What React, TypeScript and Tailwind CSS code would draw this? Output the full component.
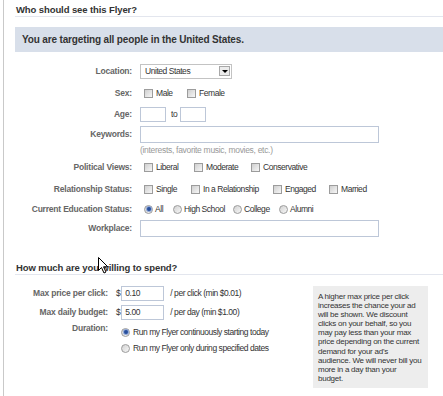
import React from 'react';

const lbl = "shrink-0 text-right text-[8.5px] font-bold tracking-[-0.2px] text-[#666] leading-[12px]";
const opt = "text-[8.5px] tracking-[-0.45px] text-[#333] leading-[12px] whitespace-nowrap";

function Box() {
  return <span className="block w-[9px] h-[9px] shrink-0 border border-[#9c9c9c] bg-gradient-to-br from-[#cfcfcf] to-[#f7f7f7]" />;
}

function Radio({ on }: { on?: boolean }) {
  return (
    <span className="flex items-center justify-center w-[9px] h-[9px] shrink-0 rounded-full border border-[#9c9c9c] bg-gradient-to-br from-[#d2d2d2] to-[#f7f7f7]">
      {on && <span className="block w-[4px] h-[4px] rounded-full bg-[#274f9c] ring-1 ring-[#8fa7d6]" />}
    </span>
  );
}

function Check({ label, w }: { label: string; w?: string }) {
  return (
    <div className={`flex items-center ${w ?? ''}`}>
      <Box />
      <span className={`ml-[3px] ${opt}`}>{label}</span>
    </div>
  );
}

function RadioOpt({ label, w, on }: { label: string; w?: string; on?: boolean }) {
  return (
    <div className={`flex items-center ${w ?? ''}`}>
      <Radio on={on} />
      <span className={`ml-[2px] ${opt}`}>{label}</span>
    </div>
  );
}

function Row({ label, className, children }: { label: string; className: string; children?: React.ReactNode }) {
  return (
    <div className={`flex items-center h-[18px] ${className}`}>
      <div className={`w-[117px] ${lbl}`}>{label}</div>
      <div className="ml-[8px] flex items-center">{children}</div>
    </div>
  );
}

function Heading({ children, className }: { children: React.ReactNode; className: string }) {
  return (
    <div className={`pt-[4px] pl-[1px] border-b border-[#e3e6ee] ${className}`}>
      <div className="text-[9.5px] font-bold tracking-[-0.1px] text-[#333] leading-[12px]">{children}</div>
    </div>
  );
}

const helpLines = [
  'A higher max price per click',
  'increases the chance your ad',
  'will be shown. We discount',
  'clicks on your behalf, so you',
  'may pay less than your max',
  'price depending on the current',
  "demand for your ad's",
  'audience. We will never bill you',
  'more in a day than your',
  'budget.',
];

export default function App() {
  return (
    <div className="relative w-[443px] h-[396px] overflow-hidden bg-white font-['Liberation_Sans',Arial,sans-serif]">
      <div className="ml-[3px] h-full border-l border-[#c9c9c9] pl-[11px]">
        {/* Who should see */}
        <Heading className="">Who should see this Flyer?</Heading>

        <div className="mt-[10px] h-[25px] bg-[#d8dfea] pl-[7px] text-[10px] font-bold tracking-[-0.15px] text-[#333] leading-[25px]">
          You are targeting all people in the United States.
        </div>

        <Row label="Location:" className="mt-[10px]">
          <div className="flex items-center w-[92px] h-[15px] border border-[#c3c3c3] bg-white pl-[4px] pr-[1px]">
            <span className={`flex-1 ${opt}`}>United States</span>
            <span className="flex items-center justify-center w-[11px] h-[10px] border border-[#a8a8a8] bg-[#ececec]">
              <span className="block w-0 h-0 border-l-[3px] border-r-[3px] border-t-[3px] border-l-transparent border-r-transparent border-t-black" />
            </span>
          </div>
        </Row>

        <Row label="Sex:" className="mt-[4px]">
          <div className="flex items-center pl-[4px]">
            <Check label="Male" w="w-[43px]" />
            <Check label="Female" />
          </div>
        </Row>

        <Row label="Age:" className="mt-[3px]">
          <span className="block w-[26px] h-[15px] border border-[#bdc7d8]" />
          <span className={`ml-[5px] ${opt}`}>to</span>
          <span className="ml-[3px] block w-[26px] h-[15px] border border-[#bdc7d8]" />
        </Row>

        <Row label="Keywords:" className="mt-[2px]">
          <span className="block w-[239px] h-[17px] border border-[#bdc7d8]" />
        </Row>

        <div className="flex h-[10px] items-center mt-[2px]">
          <div className="ml-[125px] text-[8.5px] tracking-[-0.3px] text-[#999] leading-[10px] whitespace-nowrap">
            (interests, favorite music, movies, etc.)
          </div>
        </div>

        <Row label="Political Views:" className="mt-[3px]">
          <div className="flex items-center pl-[4px]">
            <Check label="Liberal" w="w-[50px]" />
            <Check label="Moderate" w="w-[57px]" />
            <Check label="Conservative" />
          </div>
        </Row>

        <Row label="Relationship Status:" className="mt-[4px]">
          <div className="flex items-center pl-[4px]">
            <Check label="Single" w="w-[47px]" />
            <Check label="In a Relationship" w="w-[82px]" />
            <Check label="Engaged" w="w-[56px]" />
            <Check label="Married" />
          </div>
        </Row>

        <Row label="Current Education Status:" className="mt-[2px]">
          <div className="flex items-center pl-[4px]">
            <RadioOpt label="All" w="w-[29px]" on />
            <RadioOpt label="High School" w="w-[60px]" />
            <RadioOpt label="College" w="w-[46px]" />
            <RadioOpt label="Alumni" />
          </div>
        </Row>

        <Row label="Workplace:" className="mt-[1px]">
          <span className="block w-[239px] h-[17px] border border-[#bdc7d8]" />
        </Row>

        {/* How much */}
        <Heading className="mt-[21px]">How much are you willing to spend?</Heading>

        <div className="flex items-start mt-[9px]">
          <div className="w-[298px] shrink-0">
            <div className="flex items-center h-[18px]">
              <div className={`w-[93px] ${lbl}`}>Max price per click:</div>
              <span className={`ml-[8px] ${opt}`}>$</span>
              <span className={`ml-[1px] flex items-center w-[43px] h-[15px] border border-[#bdc7d8] pl-[3px] ${opt}`}>0.10</span>
              <span className={`ml-[6px] ${opt}`}>/ per click (min $0.01)</span>
            </div>
            <div className="flex items-center h-[18px] mt-[1px]">
              <div className={`w-[93px] ${lbl}`}>Max daily budget:</div>
              <span className={`ml-[8px] ${opt}`}>$</span>
              <span className={`ml-[1px] flex items-center w-[43px] h-[15px] border border-[#bdc7d8] pl-[3px] ${opt}`}>5.00</span>
              <span className={`ml-[6px] ${opt}`}>/ per day (min $1.00)</span>
            </div>
            <div className="flex items-start mt-[1px]">
              <div className={`w-[93px] ${lbl}`}>Duration:</div>
              <div className="ml-[13px] pt-[2px]">
                <div className="flex items-center h-[16px]">
                  <Radio on />
                  <span className={`ml-[3px] ${opt}`}>Run my Flyer continuously starting today</span>
                </div>
                <div className="flex items-center h-[16px]">
                  <Radio />
                  <span className={`ml-[3px] ${opt}`}>Run my Flyer only during specified dates</span>
                </div>
              </div>
            </div>
          </div>
          <div className="mt-[2px] w-[115px] h-[102px] shrink-0 bg-[#ededed] pl-[5px] pt-[6px]">
            {helpLines.map((l) => (
              <div key={l} className="text-[8px] tracking-[-0.25px] leading-[9.1px] text-[#333] whitespace-nowrap">
                {l}
              </div>
            ))}
          </div>
        </div>
      </div>

      {/* mouse pointer */}
      <svg className="absolute left-[98px] top-[257px]" width="11" height="17" viewBox="0 0 11 17">
        <path d="M0.5 0.5 L0.5 13.5 L3.5 10.5 L6 16 L8 15 L5.5 9.8 L9.8 9.8 Z" fill="white" stroke="black" strokeWidth="1" strokeLinejoin="round" />
      </svg>
    </div>
  );
}
